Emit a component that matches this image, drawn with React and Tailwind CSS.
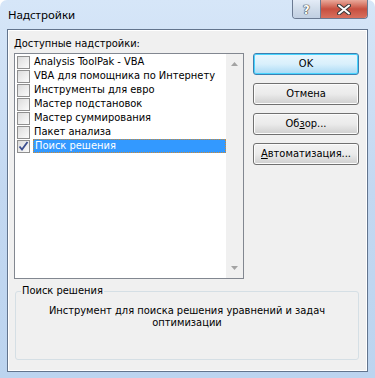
import React from 'react';

const items = [
  { name: 'Analysis ToolPak - VBA', checked: false },
  { name: 'VBA для помощника по Интернету', checked: false },
  { name: 'Инструменты для евро', checked: false },
  { name: 'Мастер подстановок', checked: false },
  { name: 'Мастер суммирования', checked: false },
  { name: 'Пакет анализа', checked: false },
  { name: 'Поиск решения', checked: true, selected: true },
];

const CheckBox = ({ checked }) => (
  <span className="flex h-[13px] w-[13px] shrink-0 items-center justify-center border border-[#8f8f8f] bg-gradient-to-br from-[#dcdcdc] to-[#fbfbfb]">
    {checked && (
      <svg width="11" height="11" viewBox="0 0 11 11">
        <path d="M1.5 5.5 L4 8.5 L9.5 1" fill="none" stroke="#3c4f8f" strokeWidth="1.8" />
      </svg>
    )}
  </span>
);

const Button = ({ children, primary }) => (
  <button
    className={`h-[22px] w-[106px] rounded-[3px] border text-[11px] text-black ${
      primary
        ? 'border-[#3c7fb1] bg-gradient-to-b from-[#eaf6fd] via-[#d9f0fc] to-[#a7d9f5] shadow-[inset_0_0_0_1px_#48d4fe]'
        : 'border-[#707070] bg-gradient-to-b from-[#f2f2f2] via-[#ebebeb] to-[#cfcfcf] shadow-[inset_0_0_0_1px_#fcfcfc]'
    }`}
  >
    {children}
  </button>
);

export default function App() {
  return (
    <div
      className="flex h-[378px] w-[375px] flex-col rounded-t-[7px] bg-gradient-to-b from-[#d6e6f8] via-[#c3d8f1] to-[#bcd4ef] px-[7px] pb-[6px] text-black"
      style={{ fontFamily: '"DejaVu Sans Condensed", "DejaVu Sans", sans-serif' }}
    >
      {/* Title bar */}
      <div className="flex h-[29px] shrink-0 items-start justify-between">
        <span
          className="pl-[1px] pt-[7px] text-[11.5px] leading-[16px] text-black"
          style={{ fontFamily: '"Noto Sans", sans-serif' }}
        >
          Надстройки
        </span>
        <div className="flex h-[19px] overflow-hidden rounded-b-[4px] border border-t-0 border-[#6b7a92]">
          <div className="flex w-[28px] items-center justify-center border-r border-[#6b7a92] bg-gradient-to-b from-[#e4ecf7] via-[#d0dcea] to-[#c1cfe2]">
            <span className="text-[13px] font-bold leading-none text-white [text-shadow:0_0_1px_#333,0_0_1px_#333,0_0_1px_#333]">?</span>
          </div>
          <div className="flex w-[46px] items-center justify-center bg-gradient-to-b from-[#e9a99b] via-[#c74f3f] to-[#d8705e]">
            <svg width="14" height="11" viewBox="0 0 14 11">
              <path d="M2 1.5 L12 9.5 M12 1.5 L2 9.5" stroke="#3a3a3a" strokeWidth="4" strokeLinecap="round" />
              <path d="M2 1.5 L12 9.5 M12 1.5 L2 9.5" stroke="#ffffff" strokeWidth="2" strokeLinecap="round" />
            </svg>
          </div>
        </div>
      </div>

      {/* Client area */}
      <div className="flex flex-1 flex-col border border-[#62748d] bg-[#f0f0f0] pl-[6px] pr-[8px] pt-[7px] text-[11px] leading-[14px] shadow-[inset_0_0_0_1px_#ffffff]">
        <div className="flex gap-[9px]">
          <div className="flex w-[230px] flex-col">
            <span>
              <span className="underline">Д</span>оступные надстройки:
            </span>
            <div className="mt-[2px] flex h-[226px] border border-[#828790] bg-white">
              <ul className="flex flex-1 flex-col pl-[2px] pt-[1px]">
                {items.map((it) => (
                  <li key={it.name} className="flex h-[14px] items-center gap-[3px]">
                    <CheckBox checked={it.checked} />
                    <span
                      className={`flex h-[14px] flex-1 items-center pl-[1px] ${
                        it.selected ? 'border border-dotted border-[#d08a30] bg-[#3399ff] text-white' : ''
                      }`}
                    >
                      {it.name}
                    </span>
                  </li>
                ))}
              </ul>
              <div className="flex w-[17px] flex-col items-center justify-between bg-[#f0f0f0] py-[8px]">
                <svg width="7" height="4" viewBox="0 0 7 4">
                  <path d="M0 4 L3.5 0 L7 4 Z" fill="#a3a3a3" />
                </svg>
                <svg width="7" height="4" viewBox="0 0 7 4">
                  <path d="M0 0 L3.5 4 L7 0 Z" fill="#a3a3a3" />
                </svg>
              </div>
            </div>
          </div>
          <div className="flex flex-col gap-[8px] pt-[16px]">
            <Button primary>OK</Button>
            <Button>Отмена</Button>
            <Button>
              Об<span className="underline">з</span>ор...
            </Button>
            <Button>
              <span className="underline">А</span>втоматизация...
            </Button>
          </div>
        </div>

        <fieldset className="ml-[1px] mt-[5px] h-[76px] rounded-[3px] border border-[#d5dfe5] px-[4px]">
          <legend className="ml-[1px] px-[1px] leading-[14px]">Поиск решения</legend>
          <p className="mx-auto mt-[7px] w-[290px] text-center leading-[12px]">
            Инструмент для поиска решения уравнений и задач оптимизации
          </p>
        </fieldset>
      </div>
    </div>
  );
}
